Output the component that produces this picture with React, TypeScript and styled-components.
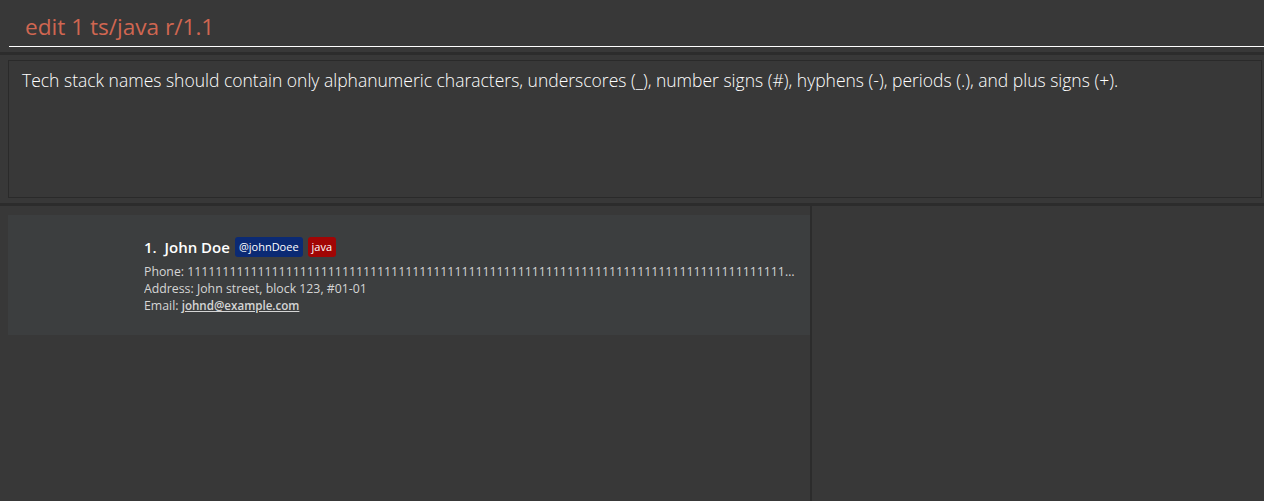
import React from 'react';
import styled, {createGlobalStyle} from 'styled-components';

const GlobalStyle = createGlobalStyle`
  html, body {
    margin: 0;
    padding: 0;
    background: #383838;
    height: 100%;
  }
  #root {
    height: 100%;
  }
`

interface Person {
    index: number,
    name: string,
    telegram: string,
    tags: string[],
    phone: string,
    address: string,
    email: string
}

const person: Person = {
    index: 1,
    name: 'John Doe',
    telegram: '@johnDoee',
    tags: ['java'],
    phone: '1'.repeat(140),
    address: 'John street, block 123, #01-01',
    email: 'johnd@example.com'
}

const App = () => {
    return (
        <>
            <GlobalStyle/>
            <StyledWindow>
                <StyledCommandPane>
                    <StyledCommandInput>edit 1 ts/java r/1.1</StyledCommandInput>
                </StyledCommandPane>
                <StyledHDivider/>
                <StyledResultPane>
                    <StyledResultBox>
                        Tech stack names should contain only alphanumeric characters, underscores (_), number signs (#),
                        hyphens (-), periods (.), and plus signs (+).
                    </StyledResultBox>
                </StyledResultPane>
                <StyledHDivider/>
                <StyledSplit>
                    <StyledListPane>
                        <StyledCard>
                            <StyledCardBody>
                                <StyledNameRow>
                                    <StyledName>{person.index}.&nbsp; {person.name}</StyledName>
                                    <StyledTag $color="#0b2a74">{person.telegram}</StyledTag>
                                    {person.tags.map(tag => (
                                        <StyledTag key={tag} $color="#a10505">{tag}</StyledTag>
                                    ))}
                                </StyledNameRow>
                                <StyledField>Phone: {person.phone}</StyledField>
                                <StyledField>Address: {person.address}</StyledField>
                                <StyledField>Email: <StyledEmail>{person.email}</StyledEmail></StyledField>
                            </StyledCardBody>
                        </StyledCard>
                    </StyledListPane>
                    <StyledVDivider/>
                    <StyledSidePane/>
                </StyledSplit>
            </StyledWindow>
        </>
    );
};

const StyledWindow = styled.div`
  display: flex;
  flex-direction: column;
  height: 501px;
  background: #383838;
  font-family: "Open Sans", "Noto Sans", sans-serif;
  overflow: hidden;
`

const StyledCommandPane = styled.div`
  padding: 9px 0 5px 9px;
`

const StyledCommandInput = styled.div`
  height: 38px;
  box-sizing: border-box;
  border-bottom: 1px solid #ffffff;
  padding-left: 16px;
  padding-bottom: 3px;
  display: flex;
  align-items: center;
  color: #d06651;
  font-size: 22.6px;
`

const StyledHDivider = styled.div`
  height: 3px;
  background: #2c2c2c;
`

const StyledResultPane = styled.div`
  padding: 5px 2px 5px 8px;
`

const StyledResultBox = styled.div`
  height: 138px;
  box-sizing: border-box;
  border: 1px solid #2a2a2a;
  padding: 6px 13px;
  color: #ffffff;
  font-size: 17.5px;
  font-weight: 300;
  line-height: 26px;
`

const StyledSplit = styled.div`
  flex: 1;
  display: flex;
`

const StyledListPane = styled.div`
  width: 810px;
  padding: 9px 0 0 8px;
  box-sizing: border-box;
`

const StyledVDivider = styled.div`
  width: 2px;
  background: #2c2c2c;
`

const StyledSidePane = styled.div`
  flex: 1;
`

const StyledCard = styled.div`
  height: 120px;
  background: #3c3e3f;
  box-sizing: border-box;
  padding: 22px 13px 0 136px;
`

const StyledCardBody = styled.div`
  display: flex;
  flex-direction: column;
  min-width: 0;
`

const StyledNameRow = styled.div`
  display: flex;
  align-items: center;
  gap: 5px;
  margin-bottom: 6px;
`

const StyledName = styled.span`
  color: #ffffff;
  font-size: 15px;
  font-weight: 600;
`

const StyledTag = styled.span<{ $color: string }>`
  background: ${p => p.$color};
  color: #ffffff;
  font-size: 11px;
  padding: 2px 4px;
  border-radius: 3px;
  line-height: 16px;
`

const StyledField = styled.div`
  color: #d5d5d5;
  font-size: 12.3px;
  line-height: 17px;
  white-space: nowrap;
  overflow: hidden;
  text-overflow: ellipsis;
`

const StyledEmail = styled.span`
  text-decoration: underline;
  font-weight: 600;
  font-size: 11.6px;
`

export default App;
